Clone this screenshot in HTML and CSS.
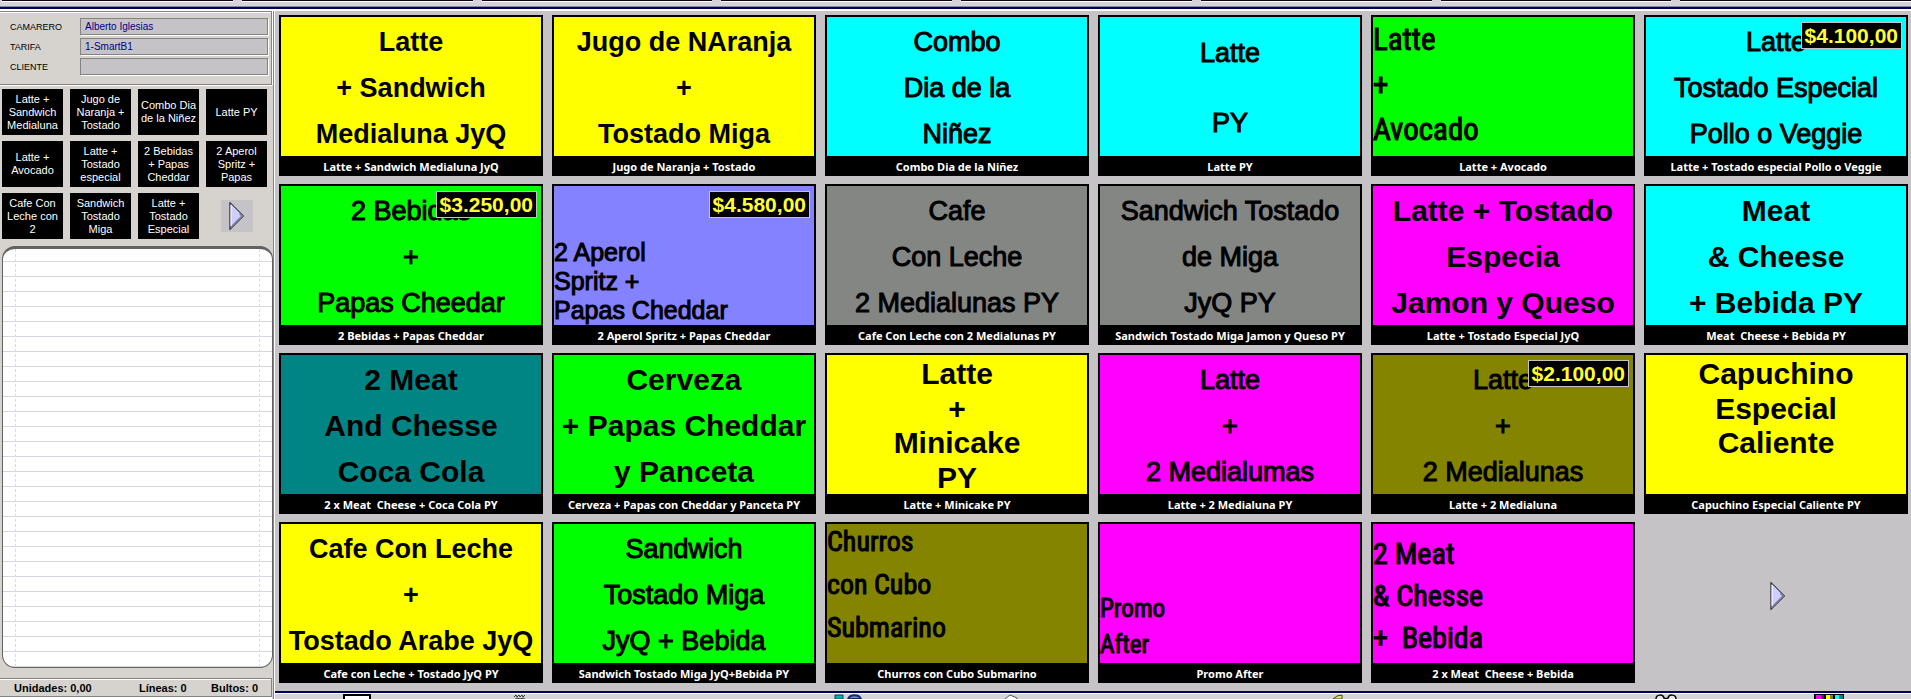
FILE: index.html
```html
<!DOCTYPE html>
<html lang="es">
<head>
<meta charset="utf-8">
<title>Punto de venta</title>
<link rel="stylesheet" href="styles.css">
</head>
<body>
<div class="app">
  <div class="topbar"><i></i><i></i><i></i><i></i><i></i><i></i><i></i><i></i></div>

  <aside class="side">
    <form class="info">
      <label for="camarero">CAMARERO</label><input id="camarero" value="Alberto Iglesias" readonly>
      <label for="tarifa">TARIFA</label><input id="tarifa" value="1-SmartB1" readonly>
      <label for="cliente">CLIENTE</label><input id="cliente" value="" readonly>
    </form>
    <div class="quick">
      <button>Latte + Sandwich Medialuna</button>
      <button>Jugo de Naranja + Tostado</button>
      <button>Combo Dia de la Niñez</button>
      <button>Latte PY</button>
      <button>Latte + Avocado</button>
      <button>Latte + Tostado especial</button>
      <button>2 Bebidas + Papas Cheddar</button>
      <button>2 Aperol Spritz + Papas</button>
      <button>Cafe Con Leche con 2</button>
      <button>Sandwich Tostado Miga</button>
      <button>Latte + Tostado Especial</button>
      <button class="next" aria-label="Siguiente"><svg width="16" height="30" viewBox="0 0 16 30"><path d="M1 1.500V28.500L14.500 15Z" fill="#ceceff" stroke="#000"/><path d="M2 26L13 15L10.500 12.500" fill="none" stroke="#7b7da5" stroke-width="1.500"/><path d="M2 4V25" stroke="#fff"/></svg></button>
    </div>
    <div class="ticket"><div class="paper"></div></div>
    <div class="totals"><span>Unidades: 0,00</span><span>Líneas: 0</span><span>Bultos: 0</span></div>
  </aside>

  <main class="tiles">
    <button class="tile yellow strong"><span class="face"><span>Latte</span><span>+ Sandwich</span><span>Medialuna JyQ</span></span><span class="cap">Latte + Sandwich Medialuna JyQ</span></button>
    <button class="tile yellow strong"><span class="face"><span>Jugo de NAranja</span><span>+</span><span>Tostado Miga</span></span><span class="cap">Jugo de Naranja + Tostado</span></button>
    <button class="tile cyan"><span class="face"><span>Combo</span><span>Dia de la</span><span>Niñez</span></span><span class="cap">Combo Dia de la Niñez</span></button>
    <button class="tile cyan"><span class="face"><span>Latte</span><span>PY</span></span><span class="cap">Latte PY</span></button>
    <button class="tile green left avocado"><span class="face"><span>Latte</span><span>+</span><span>Avocado</span></span><span class="cap">Latte + Avocado</span></button>
    <button class="tile cyan"><span class="face"><span>Latte</span><span>Tostado Especial</span><span>Pollo o Veggie</span></span><span class="price">$4.100,00</span><span class="cap">Latte + Tostado especial Pollo o Veggie</span></button>

    <button class="tile green"><span class="face"><span>2 Bebidas</span><span>+</span><span>Papas Cheedar</span></span><span class="price">$3.250,00</span><span class="cap">2 Bebidas + Papas Cheddar</span></button>
    <button class="tile blue left aperol"><span class="face"><span>2 Aperol</span><span>Spritz +</span><span>Papas Cheddar</span></span><span class="price">$4.580,00</span><span class="cap">2 Aperol Spritz + Papas Cheddar</span></button>
    <button class="tile gray"><span class="face"><span>Cafe</span><span>Con Leche</span><span>2 Medialunas PY</span></span><span class="cap">Cafe Con Leche con 2 Medialunas PY</span></button>
    <button class="tile gray"><span class="face"><span>Sandwich Tostado</span><span>de Miga</span><span>JyQ PY</span></span><span class="cap">Sandwich Tostado Miga Jamon y Queso PY</span></button>
    <button class="tile magenta big"><span class="face"><span>Latte + Tostado</span><span>Especia</span><span>Jamon y Queso</span></span><span class="cap">Latte + Tostado Especial JyQ</span></button>
    <button class="tile cyan big"><span class="face"><span>Meat</span><span>&amp; Cheese</span><span>+ Bebida PY</span></span><span class="cap">Meat&nbsp; Cheese + Bebida PY</span></button>

    <button class="tile teal big"><span class="face"><span>2 Meat</span><span>And Chesse</span><span>Coca Cola</span></span><span class="cap">2 x Meat&nbsp; Cheese + Coca Cola PY</span></button>
    <button class="tile green big"><span class="face"><span>Cerveza</span><span>+ Papas Cheddar</span><span>y Panceta</span></span><span class="cap">Cerveza + Papas con Cheddar y Panceta PY</span></button>
    <button class="tile yellow big"><span class="face"><span>Latte</span><span>+</span><span>Minicake</span><span>PY</span></span><span class="cap">Latte + Minicake PY</span></button>
    <button class="tile magenta"><span class="face"><span>Latte</span><span>+</span><span>2 Medialumas</span></span><span class="cap">Latte + 2 Medialuna PY</span></button>
    <button class="tile olive"><span class="face"><span>Latte</span><span>+</span><span>2 Medialunas</span></span><span class="price">$2.100,00</span><span class="cap">Latte + 2 Medialuna</span></button>
    <button class="tile yellow big"><span class="face"><span>Capuchino</span><span>Especial</span><span>Caliente</span><span></span></span><span class="cap">Capuchino Especial Caliente PY</span></button>

    <button class="tile yellow strong"><span class="face"><span>Cafe Con Leche</span><span>+</span><span>Tostado Arabe JyQ</span></span><span class="cap">Cafe con Leche + Tostado JyQ PY</span></button>
    <button class="tile green"><span class="face"><span>Sandwich</span><span>Tostado Miga</span><span>JyQ + Bebida</span></span><span class="cap">Sandwich Tostado Miga JyQ+Bebida PY</span></button>
    <button class="tile olive left churros"><span class="face"><span>Churros</span><span>con Cubo</span><span>Submarino</span></span><span class="cap">Churros con Cubo Submarino</span></button>
    <button class="tile magenta left promo"><span class="face"><span>Promo</span><span>After</span></span><span class="cap">Promo After</span></button>
    <button class="tile magenta left meat"><span class="face"><span>2 Meat</span><span>&amp; Chesse</span><span>+&nbsp; Bebida</span></span><span class="cap">2 x Meat&nbsp; Cheese + Bebida</span></button>
    <button class="more" aria-label="Siguiente"><svg width="16" height="30" viewBox="0 0 16 30"><path d="M1 1.500V28.500L14.500 15Z" fill="#ceceff" stroke="#000"/><path d="M2 26L13 15L10.500 12.500" fill="none" stroke="#7b7da5" stroke-width="1.500"/><path d="M2 4V25" stroke="#fff"/></svg></button>
  </main>

  <footer class="tools">
    <span><svg width="28" height="5"><path d="M1 5V1H27V5" fill="#fff" stroke="#000" stroke-width="2"/></svg></span>
    <span><svg width="14" height="5"><path d="M1 3l2-2 1 2 2-2 1 2 2-2 1 2 2-2M2 5l2-1 3 1 3-1 2 1" fill="none" stroke="#333"/></svg></span>
    <span></span>
    <span><svg width="28" height="5"><path d="M1 1h8v4h-8z" fill="#00b5b5" stroke="#004a4a"/><path d="M14 5C16 0 25 0 27 5Z" fill="#6b8cce" stroke="#18296b" stroke-width="2"/></svg></span>
    <span><svg width="14" height="5"><path d="M1 5L6 1L13 4V5" fill="#fff" stroke="#555"/></svg></span>
    <span></span>
    <span><svg width="12" height="5"><path d="M1 5L5 2L10 1V5Z" fill="#dede73" stroke="#4a4a18"/></svg></span>
    <span></span>
    <span><svg width="22" height="5"><path d="M1 5C1 0 8 0 9 4C11 5 11 5 13 4C14 0 21 0 21 5" fill="#e7e7e7" stroke="#000" stroke-width="1.500"/></svg></span>
    <span><svg width="30" height="5"><path d="M0 0H30V5H0Z" fill="#000"/><path d="M2 1h5v4h-5z" fill="#f0f"/><path d="M7 1h3v4h-3z" fill="#840084"/><path d="M12 1h4v4h-4z" fill="#ff0"/><path d="M16 1h3v4h-3z" fill="#848400"/><path d="M21 1h4v4h-4z" fill="#0ff"/><path d="M25 1h4v4h-4z" fill="#008484"/></svg></span>
  </footer>
</div>
</body>
</html>
```
FILE: styles.css
```css
* { box-sizing: border-box; }

body {
  margin: 0;
  background: #c6c3c6;
  font-family: "Liberation Sans", Arial, sans-serif;
  color: #000;
}

button { font-family: inherit; color: inherit; padding: 0; border: 0; cursor: pointer; }

.app {
  display: grid;
  grid-template-columns: 275px 1fr;
  grid-template-rows: 11px 1fr 8px;
  min-height: 100vh;
}

/* Bottom edge of the family buttons */
.topbar {
  grid-column: 1 / 3;
  display: grid;
  grid-template-columns: repeat(8, 1fr);
  gap: 9px;
  padding: 0 0 0 2px;
  background: linear-gradient(#d6d3d6 6px, #8486a5 6px 7px, #00005a 7px 9px, #fff 9px);
}
.topbar i { height: 2px; background: #100010; border-bottom: 1px solid #fff; }

.side {
  grid-row: 2 / 4;
  display: flex;
  flex-direction: column;
  background: #d6d3ce;
  border-right: 1px solid #fff;
  box-shadow: inset -1px 0 #848284;
}

.info {
  display: grid;
  grid-template-columns: 70px 1fr;
  gap: 3px 0;
  align-items: center;
  margin: 0 2px 4px 0;
  padding: 6px 3px 9px 10px;
  border: 1px solid #848284;
  border-left: 0;
  box-shadow: inset 0 1px #fff, 0 1px #fff, 1px 0 #fff;
}
.info label { font-size: 9px; }
.info input {
  width: 100%;
  height: 17px;
  padding: 0 4px;
  font: 10px "Liberation Sans", Arial, sans-serif;
  color: #000084;
  background: #c6c3c6;
  border: 1px solid #848284;
  box-shadow: 1px 1px #fff;
  border-radius: 0;
  outline: 0;
}

.quick {
  display: grid;
  grid-template-columns: repeat(4, 61px);
  grid-auto-rows: 46px;
  gap: 6px 7px;
  margin-left: 2px;
}
.quick button {
  padding: 0 2px;
  background: #000;
  color: #fff;
  font-size: 11px;
  line-height: 13px;
}
.quick .next {
  display: grid;
  place-items: center;
  place-self: center;
  width: 32px;
  height: 32px;
  background: #c6c3c6;
}

/* Ruled receipt paper */
.ticket {
  flex: 1;
  display: flex;
  margin: 7px 1px 10px 2px;
  padding: 0 12px;
  border: 1px solid #636163;
  border-top-width: 3px;
  border-radius: 13px;
  background: repeating-linear-gradient(#fff 0 12px, #d6d7e1 12px 13px, #fff 13px 15px);
}
.paper {
  flex: 1;
  border: 1px dashed #dddbe1;
  border-width: 0 1px;
}

.totals {
  display: grid;
  grid-template-columns: 125px 72px 1fr;
  align-items: center;
  height: 19px;
  margin: 0 2px 2px 0;
  padding-left: 14px;
  font-size: 11px;
  font-weight: bold;
  border: 1px solid #848284;
  border-left: 0;
  box-shadow: inset 0 1px #fff, 0 2px #fff;
}

.tiles {
  display: grid;
  grid-template-columns: repeat(6, 1fr);
  grid-template-rows: repeat(4, 1fr);
  gap: 8px 9px;
  padding: 4px 3px 8px 4px;
}
.tile {
  position: relative;
  display: flex;
  flex-direction: column;
  border: 2px solid #000;
  border-bottom: 0;
}
.face {
  flex: 1;
  align-self: stretch;
  display: flex;
  flex-direction: column;
  font-size: 27px;
  line-height: 30px;
  white-space: nowrap;
  -webkit-text-stroke: 1px #000;
}
.face span {
  flex: 1;
  display: flex;
  align-items: center;
  justify-content: center;
  padding-top: 3px;
}
.strong .face, .big .face { font-weight: bold; -webkit-text-stroke: 0; }
.big .face { font-size: 30px; }

.cap {
  align-self: stretch;
  height: 20px;
  overflow: hidden;
  background: #000;
  color: #fff;
  font: bold 11px/22px "Noto Sans", "Open Sans", sans-serif;
  white-space: nowrap;
}

.left .face { font-family: "Roboto Condensed", "Liberation Sans", Arial, sans-serif; }
.left .face span { flex: none; justify-content: flex-start; padding-top: 0; }
.avocado .face { font-size: 31px; line-height: 45px; }
.aperol .face { justify-content: flex-end; font-family: inherit; font-size: 25px; line-height: 29px; }
.churros .face { gap: 7px; font-size: 28px; line-height: 36px; }
.promo .face { justify-content: flex-end; font-size: 25px; line-height: 36px; }
.meat .face { justify-content: flex-end; padding-bottom: 4px; font-size: 30px; line-height: 42px; }

.price {
  position: absolute;
  top: 5px;
  right: 4px;
  padding: 0 3px;
  background: #000;
  border: 1px solid #c6c3c6;
  color: #ff3;
  font-size: 21px;
  font-weight: bold;
  line-height: 25px;
}

.yellow { background: #ff0; }
.cyan { background: #0ff; }
.green { background: #0f0; }
.blue { background: #8482ff; }
.gray { background: #848684; }
.magenta { background: #f0f; }
.teal { background: #008484; }
.olive { background: #848400; }

.more { display: grid; place-items: center; padding: 0 0 14px 4px; background: none; }

.tools {
  display: grid;
  grid-template-columns: repeat(10, 1fr);
  justify-items: center;
  align-items: end;
  background: linear-gradient(#00005a 2px, #fff 2px 3px, #d6d3d6 3px);
}
.tools span { display: flex; }
```
